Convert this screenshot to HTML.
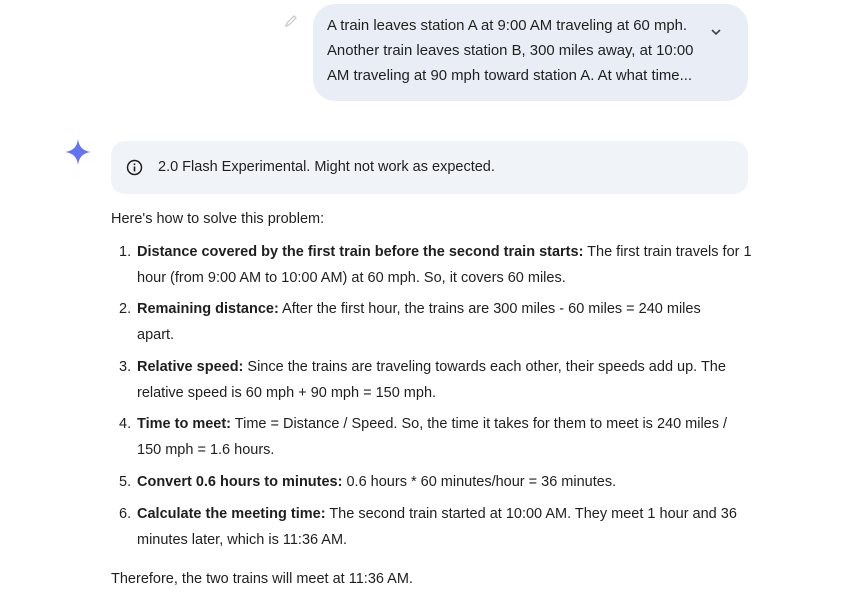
<!DOCTYPE html>
<html><head><meta charset="utf-8"><style>
*{margin:0;padding:0;box-sizing:border-box}
body{width:859px;height:605px;background:#fff;font-family:"Liberation Sans",sans-serif;color:#1f1f1f;font-size:14.5px;position:relative;overflow:hidden}
.bubble{position:absolute;left:313px;top:4px;width:435px;height:97px;background:#e9eef6;border-radius:22px}
.bubble p{position:absolute;left:14px;top:10px;line-height:25px;white-space:nowrap;font-size:14.9px}
.info{position:absolute;left:111px;top:141px;width:637px;height:53px;background:#f0f4f9;border-radius:14px}
.info span{position:absolute;left:47px;top:18px;white-space:nowrap}
.t{position:absolute;left:111px;white-space:nowrap;line-height:26px}
.li{position:absolute;left:119px;white-space:nowrap;line-height:26px}
.li .n{display:inline-block;width:18px}
.li .c{position:absolute;left:18px;top:0}
b{font-weight:bold}
</style></head><body>
<svg style="position:absolute;left:284px;top:14px" width="14" height="14" viewBox="0 0 14 14"><path d="M2 12 L3 9 L10 2 L12 4 L5 11 Z" fill="none" stroke="#c4c7c5" stroke-width="1.2"/></svg>
<div class="bubble"><p>A train leaves station A at 9:00 AM traveling at 60 mph.<br>Another train leaves station B, 300 miles away, at 10:00<br>AM traveling at 90 mph toward station A. At what time...</p>
<svg style="position:absolute;left:397px;top:23px" width="12" height="10" viewBox="0 0 12 10"><path d="M2 3 L6 7 L10 3" fill="none" stroke="#444" stroke-width="1.6"/></svg></div>
<svg style="position:absolute;left:64px;top:138px" width="28" height="28" viewBox="0 0 28 28"><defs><linearGradient id="g" x1="0" y1="0" x2="1" y2="1"><stop offset="0" stop-color="#4a7bf0"/><stop offset="1" stop-color="#7a6ef0"/></linearGradient></defs><path d="M14 1 C15 9 19 13 27 14 C19 15 15 19 14 27 C13 19 9 15 1 14 C9 13 13 9 14 1Z" fill="url(#g)"/></svg>
<div class="info"><svg style="position:absolute;left:15px;top:18px" width="17" height="17" viewBox="0 0 17 17"><circle cx="8.5" cy="8.5" r="7" fill="none" stroke="#1f1f1f" stroke-width="1.5"/><rect x="7.7" y="7.5" width="1.6" height="5" fill="#1f1f1f"/><rect x="7.7" y="4.5" width="1.6" height="1.6" fill="#1f1f1f"/></svg><span>2.0 Flash Experimental. Might not work as expected.</span></div>
<div class="t" style="top:206px">Here's how to solve this problem:</div>
<div class="li" style="top:239px"><span class="n">1.</span><span class="c"><b>Distance covered by the first train before the second train starts:</b> The first train travels for 1<br>hour (from 9:00 AM to 10:00 AM) at 60 mph. So, it covers 60 miles.</span></div>
<div class="li" style="top:296px"><span class="n">2.</span><span class="c"><b>Remaining distance:</b> After the first hour, the trains are 300 miles - 60 miles = 240 miles<br>apart.</span></div>
<div class="li" style="top:354px"><span class="n">3.</span><span class="c"><b>Relative speed:</b> Since the trains are traveling towards each other, their speeds add up. The<br>relative speed is 60 mph + 90 mph = 150 mph.</span></div>
<div class="li" style="top:411px"><span class="n">4.</span><span class="c"><b>Time to meet:</b> Time = Distance / Speed. So, the time it takes for them to meet is 240 miles /<br>150 mph = 1.6 hours.</span></div>
<div class="li" style="top:469px"><span class="n">5.</span><span class="c"><b>Convert 0.6 hours to minutes:</b> 0.6 hours * 60 minutes/hour = 36 minutes.</span></div>
<div class="li" style="top:501px"><span class="n">6.</span><span class="c"><b>Calculate the meeting time:</b> The second train started at 10:00 AM. They meet 1 hour and 36<br>minutes later, which is 11:36 AM.</span></div>
<div class="t" style="top:566px">Therefore, the two trains will meet at 11:36 AM.</div>
</body></html>
